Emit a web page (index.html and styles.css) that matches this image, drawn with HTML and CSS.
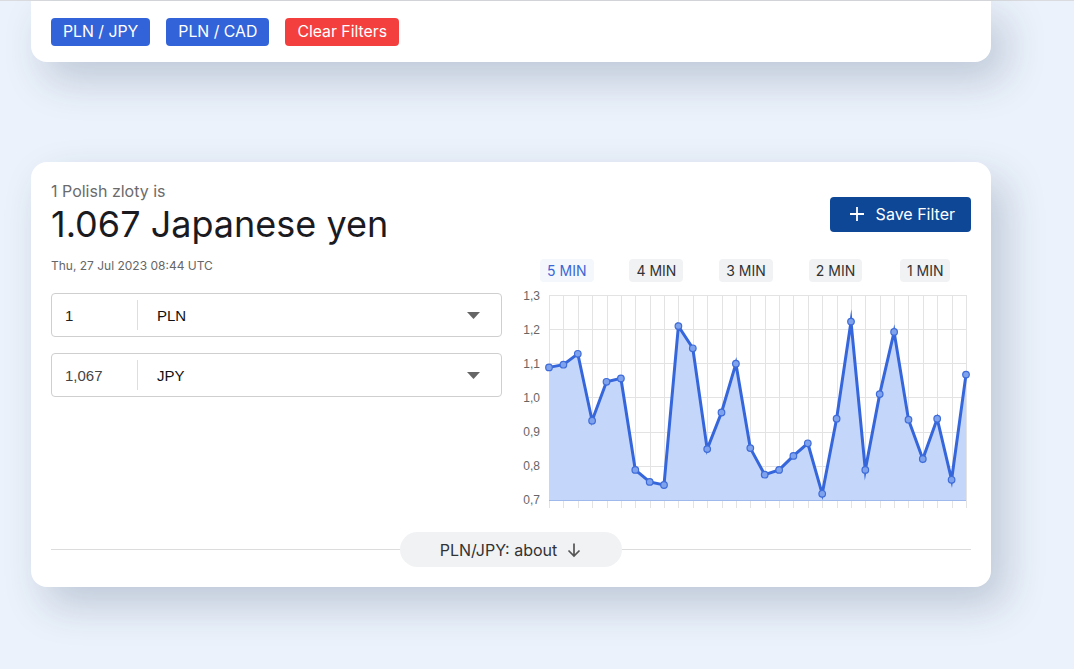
FILE: index.html
```html
<!DOCTYPE html>
<html lang="en">
<head>
<meta charset="utf-8">
<title>PLN to JPY</title>
<link rel="stylesheet" href="styles.css">
</head>
<body>
<div class="topline"></div>
<main class="page">
  <section class="card filters">
    <button class="chip chip-blue">PLN / JPY</button>
    <button class="chip chip-blue">PLN / CAD</button>
    <button class="chip chip-red">Clear Filters</button>
  </section>

  <section class="card converter">
    <header class="conv-head">
      <div class="conv-titles">
        <div class="subtitle">1 Polish zloty is</div>
        <h1 class="title">1.067 Japanese yen</h1>
      </div>
      <button class="save-btn">
        <svg class="plus" width="16" height="16" viewBox="0 0 16 16"><path d="M8 1v14M1 8h14" stroke="#fff" stroke-width="1.8" fill="none"/></svg>
        <span>Save Filter</span>
      </button>
    </header>

    <div class="conv-body">
      <div class="conv-left">
        <div class="date">Thu, 27 Jul 2023 08:44 UTC</div>
        <div class="field">
          <span class="amount">1</span>
          <span class="sep"></span>
          <span class="currency">PLN</span>
          <svg class="caret" width="13" height="7" viewBox="0 0 13 7"><path d="M0 0h13L6.5 7z" fill="#666"/></svg>
        </div>
        <div class="field">
          <span class="amount muted">1,067</span>
          <span class="sep"></span>
          <span class="currency">JPY</span>
          <svg class="caret" width="13" height="7" viewBox="0 0 13 7"><path d="M0 0h13L6.5 7z" fill="#666"/></svg>
        </div>
      </div>

      <div class="conv-right">
        <div class="tabs">
          <div class="tab-slot"><span class="tab active">5 MIN</span></div>
          <div class="tab-slot"><span class="tab">4 MIN</span></div>
          <div class="tab-slot"><span class="tab">3 MIN</span></div>
          <div class="tab-slot"><span class="tab">2 MIN</span></div>
          <div class="tab-slot"><span class="tab">1 MIN</span></div>
        </div>
        <svg class="chart" width="451" height="230" viewBox="0 0 451 230">
          <g class="hgrid" stroke="#e3e3e3" stroke-width="1">
            <path d="M29 11.5H446M29 45.5H446M29 79.5H446M29 113.5H446M29 148.5H446M29 182.5H446"/>
          </g>
          <g class="vgrid" stroke="#e3e3e3" stroke-width="1" id="vgrid"></g>
          <g class="ylabels" font-family="Liberation Sans, Arial, sans-serif" font-size="12" fill="#666" text-anchor="end">
            <text x="20" y="15.5">1,3</text>
            <text x="20" y="49.5">1,2</text>
            <text x="20" y="83.5">1,1</text>
            <text x="20" y="117.5">1,0</text>
            <text x="20" y="152">0,9</text>
            <text x="20" y="186">0,8</text>
            <text x="20" y="220">0,7</text>
          </g>
          <polygon fill="#c4d7fb" points="29,83.4 43.4,80.7 57.8,69.8 72.1,136.7 86.5,97.8 100.9,94.4 115.3,185.9 129.7,197.9 144,201 158.4,42.1 172.8,64.3 187.2,165.1 201.5,128.5 215.9,79.7 230.3,164.1 244.7,190.7 259.1,185.9 273.4,171.9 287.8,159.3 302.2,209.8 316.6,134.7 331,37.6 345.3,185.9 359.7,110.1 374.1,47.9 388.5,135.7 402.8,175 417.2,134.7 431.6,195.8 446,90.6 446,216 29,216"/>
          <path d="M29 216.5H446" stroke="#9fb9ec" stroke-width="1"/>
          <polyline fill="none" stroke="#3566db" stroke-width="3" stroke-linejoin="miter" stroke-miterlimit="10" points="29,83.4 43.4,80.7 57.8,69.8 72.1,136.7 86.5,97.8 100.9,94.4 115.3,185.9 129.7,197.9 144,201 158.4,42.1 172.8,64.3 187.2,165.1 201.5,128.5 215.9,79.7 230.3,164.1 244.7,190.7 259.1,185.9 273.4,171.9 287.8,159.3 302.2,209.8 316.6,134.7 331,37.6 345.3,185.9 359.7,110.1 374.1,47.9 388.5,135.7 402.8,175 417.2,134.7 431.6,195.8 446,90.6"/>
          <g fill="#7fa2ec" stroke="#3f6cd9" stroke-width="1.2">
            <circle cx="29" cy="83.4" r="3.3"/><circle cx="43.4" cy="80.7" r="3.3"/><circle cx="57.8" cy="69.8" r="3.3"/><circle cx="72.1" cy="136.7" r="3.3"/><circle cx="86.5" cy="97.8" r="3.3"/><circle cx="100.9" cy="94.4" r="3.3"/><circle cx="115.3" cy="185.9" r="3.3"/><circle cx="129.7" cy="197.9" r="3.3"/><circle cx="144" cy="201" r="3.3"/><circle cx="158.4" cy="42.1" r="3.3"/><circle cx="172.8" cy="64.3" r="3.3"/><circle cx="187.2" cy="165.1" r="3.3"/><circle cx="201.5" cy="128.5" r="3.3"/><circle cx="215.9" cy="79.7" r="3.3"/><circle cx="230.3" cy="164.1" r="3.3"/><circle cx="244.7" cy="190.7" r="3.3"/><circle cx="259.1" cy="185.9" r="3.3"/><circle cx="273.4" cy="171.9" r="3.3"/><circle cx="287.8" cy="159.3" r="3.3"/><circle cx="302.2" cy="209.8" r="3.3"/><circle cx="316.6" cy="134.7" r="3.3"/><circle cx="331" cy="37.6" r="3.3"/><circle cx="345.3" cy="185.9" r="3.3"/><circle cx="359.7" cy="110.1" r="3.3"/><circle cx="374.1" cy="47.9" r="3.3"/><circle cx="388.5" cy="135.7" r="3.3"/><circle cx="402.8" cy="175" r="3.3"/><circle cx="417.2" cy="134.7" r="3.3"/><circle cx="431.6" cy="195.8" r="3.3"/><circle cx="446" cy="90.6" r="3.3"/>
          </g>
        </svg>
      </div>
    </div>

    <footer class="conv-foot">
      <span class="rule"></span>
      <button class="about-pill">
        <span>PLN/JPY: about</span>
        <svg width="16" height="16" viewBox="0 0 16 16"><path d="M8 1.5v12.5M2.5 8.5L8 14l5.5-5.5" stroke="#555" stroke-width="1.7" fill="none"/></svg>
      </button>
      <span class="rule"></span>
    </footer>
  </section>
</main>
<script>
  (function () {
    var g = document.getElementById('vgrid');
    var d = '';
    for (var i = 0; i < 30; i++) {
      var x = Math.round(29 + i * 417 / 29) + 0.5;
      d += 'M' + x + ' 11V224';
    }
    var p = document.createElementNS('http://www.w3.org/2000/svg', 'path');
    p.setAttribute('d', d);
    g.appendChild(p);
  })();
</script>
</body>
</html>
```

FILE: styles.css
```css
* { box-sizing: border-box; }

html, body {
  margin: 0;
  padding: 0;
}

body {
  background: #ebf2fb;
  font-family: Inter, "Noto Sans", sans-serif;
  color: #1a1a1a;
  min-height: 669px;
}

.topline {
  height: 1px;
  background: #d9dbde;
}

.page {
  width: 960px;
  margin-left: 31px;
}

.card {
  background: #fff;
  border-radius: 16px;
  box-shadow: 14px 18px 40px rgba(30, 50, 90, 0.22);
}

.filters {
  border-radius: 0 0 16px 16px;
  padding: 17px 20px 16px;
  display: flex;
  gap: 16px;
}

.chip {
  border: 0;
  border-radius: 4px;
  height: 28px;
  padding: 0 12px;
  font-family: Inter, sans-serif;
  font-size: 15.8px;
  color: #fff;
  line-height: 28px;
}

.chip-blue { background: #3363d8; }
.chip-red { background: #f43f3f; }

.converter {
  margin-top: 100px;
  padding: 20px 20px 20px;
}

.conv-head {
  display: flex;
  justify-content: space-between;
  align-items: center;
}

.subtitle {
  font-size: 16px;
  line-height: 19px;
  color: #6b6b6b;
}

.title {
  margin: 2px 0 0;
  font-size: 36px;
  font-weight: 400;
  line-height: 43px;
  color: #1b1b1f;
}

.save-btn {
  display: flex;
  align-items: center;
  gap: 11px;
  height: 35px;
  padding: 0 16px 0 19px;
  border: 0;
  border-radius: 4px;
  background: #0d4796;
  color: #fff;
  font-family: Inter, sans-serif;
  font-size: 16px;
}

.conv-body {
  margin-top: 12px;
  display: grid;
  grid-template-columns: 451px 451px;
  column-gap: 18px;
}

.date {
  font-size: 12px;
  line-height: 15px;
  color: #666;
}

.field {
  margin-top: 20px;
  height: 44px;
  border: 1px solid #cfcfcf;
  border-radius: 4px;
  display: flex;
  align-items: center;
  padding: 0 21px 0 13px;
  font-family: "Liberation Sans", Arial, sans-serif;
  font-size: 15px;
}

.field + .field { margin-top: 16px; }

.amount {
  width: 72px;
  color: #222;
}

.amount.muted { color: #444; }

.sep {
  width: 1px;
  height: 30px;
  background: #dedede;
}

.currency {
  flex: 1;
  padding-left: 19px;
  color: #111;
}

.caret { display: block; }

.tabs {
  margin: 1px 0 0 2px;
  width: 448px;
  display: flex;
}

.tab-slot {
  flex: 1;
  display: flex;
  justify-content: center;
}

.tab {
  display: inline-block;
  height: 23px;
  line-height: 23px;
  padding: 0 7px;
  border-radius: 4px;
  background: #f1f2f4;
  font-size: 14px;
  color: #333;
}

.tab.active {
  background: #f4f7fc;
  color: #3b67d6;
}

.chart {
  display: block;
  margin-top: 2px;
}

.conv-foot {
  margin-top: 18px;
  display: flex;
  align-items: center;
}

.rule {
  flex: 1;
  height: 1px;
  background: #dcdcdc;
}

.about-pill {
  display: flex;
  align-items: center;
  gap: 9px;
  height: 35px;
  padding: 0 40px;
  border: 0;
  border-radius: 18px;
  background: #f1f2f4;
  font-family: Inter, sans-serif;
  font-size: 16px;
  color: #333;
}
```
